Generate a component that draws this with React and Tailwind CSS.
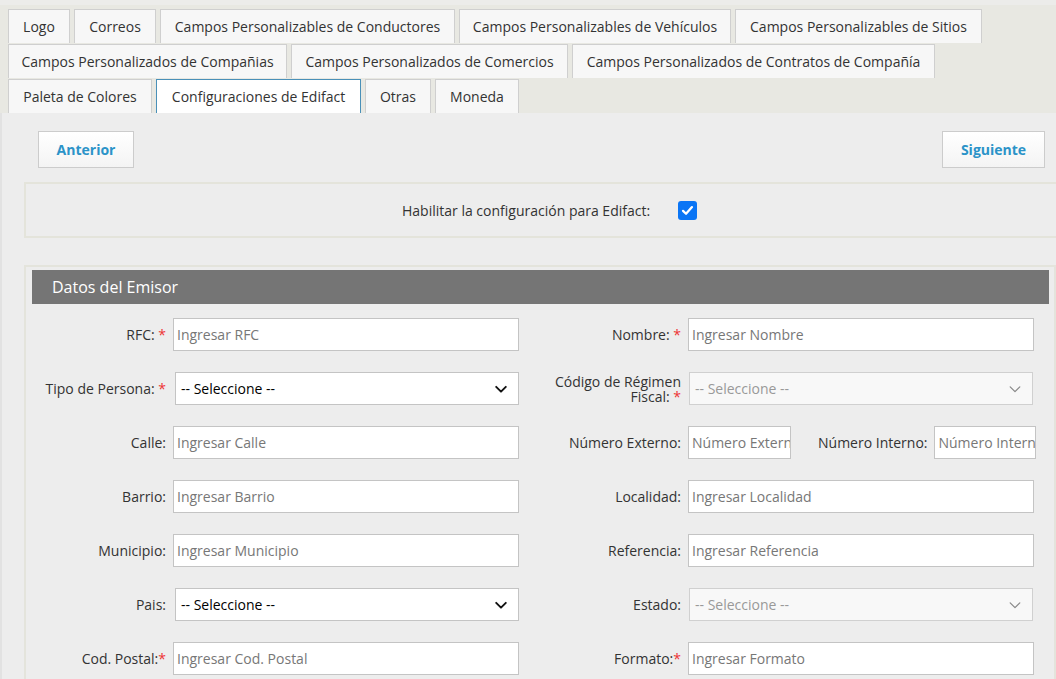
const tabRows = [
  [
    { label: 'Logo', w: 'w-[62px]' },
    { label: 'Correos', w: 'w-[82px]' },
    { label: 'Campos Personalizables de Conductores', w: 'w-[295px]' },
    { label: 'Campos Personalizables de Vehículos', w: 'w-[272px]' },
    { label: 'Campos Personalizables de Sitios', w: 'w-[247px]' },
  ],
  [
    { label: 'Campos Personalizados de Compañias', w: 'w-[279px]' },
    { label: 'Campos Personalizados de Comercios', w: 'w-[277px]' },
    { label: 'Campos Personalizados de Contratos de Compañía', w: 'w-[363px]' },
  ],
  [
    { label: 'Paleta de Colores', w: 'w-[144px]' },
    { label: 'Configuraciones de Edifact', w: 'w-[205px]', active: true },
    { label: 'Otras', w: 'w-[66px]' },
    { label: 'Moneda', w: 'w-[84px]' },
  ],
]

function Chevron({ disabled }) {
  return (
    <svg width="14" height="14" viewBox="0 0 16 16" className="shrink-0">
      <path d="M2.5 5.5 8 11l5.5-5.5" fill="none" stroke={disabled ? '#888' : '#111'}
        strokeWidth={disabled ? 1.4 : 2.2} strokeLinecap="round" strokeLinejoin="round" />
    </svg>
  )
}

function Label({ children, required, tight, className = '' }) {
  return (
    <div className={`text-right text-[#333] leading-[15px] ${className}`}>
      {children}
      {required && <span className="text-[#e33]">{tight ? '*' : ' *'}</span>}
    </div>
  )
}

function Input({ placeholder, className = 'w-[346px]' }) {
  return (
    <div className={`h-[33px] bg-white border border-[#c4c4c4] flex items-center pl-[3px] overflow-hidden whitespace-nowrap text-[#777] ${className}`}>
      {placeholder}
    </div>
  )
}

function Select({ disabled }) {
  return (
    <div className={`h-[33px] w-[344px] border flex items-center justify-between pl-[5px] pr-[10px] ${
      disabled ? 'bg-[#f8f8f8] border-[#d0d0d0] text-[#999] ml-[1px]' : 'bg-white border-[#c4c4c4] text-black ml-[2px]'
    }`}>
      <span>-- Seleccione --</span>
      <Chevron disabled={disabled} />
    </div>
  )
}

function Field({ label, required, tight, labelW, children }) {
  return (
    <div className="flex items-center">
      <Label required={required} tight={tight} className={labelW}>{label}</Label>
      <div className="ml-[7px]">{children}</div>
    </div>
  )
}

export default function App() {
  return (
    <div className="w-[1056px] h-[679px] overflow-hidden bg-[#ededed] text-[14px] font-['Open_Sans',sans-serif] text-[#333]">
      {/* Tabs */}
      <div className="bg-[#e8e8e2] border-t-[5px] border-[#ececea] pt-[4px] pl-[8px] flex flex-col gap-[1px]">
        {tabRows.map((row, i) => (
          <div key={i} className="flex gap-[4px]">
            {row.map(t => (
              <div key={t.label}
                className={`${t.w} h-[34px] flex items-center justify-center whitespace-nowrap border border-b-0 ${
                  t.active ? 'bg-white border-[#4a90b8] border-[1.5px]' : 'bg-[#f7f7f7] border-[#cfcfcf]'
                }`}>
                {t.label}
              </div>
            ))}
          </div>
        ))}
      </div>

      {/* Content */}
      <div className="border-l-2 border-[#e2e2e2]">
        <div className="flex justify-between pt-[18px] pl-[36px] pr-[11px]">
          <button className="w-[96px] h-[37px] border border-[#cccccc] bg-gradient-to-b from-white to-[#f4f4f4] font-bold text-[#2b93c8]">
            Anterior
          </button>
          <button className="w-[103px] h-[37px] border border-[#cccccc] bg-gradient-to-b from-white to-[#f4f4f4] font-bold text-[#2b93c8]">
            Siguiente
          </button>
        </div>

        <div className="ml-[22px] mt-[14px] h-[56px] border-2 border-r-0 border-[#e4e4db] flex items-center">
          <span className="ml-[376px]">Habilitar la configuración para Edifact:</span>
          <div className="ml-[28px] w-[19px] h-[19px] rounded-[3px] bg-[#0a75f5] flex items-center justify-center">
            <svg width="13" height="13" viewBox="0 0 16 16">
              <path d="M2.5 8.5 6.2 12 13.5 3.8" fill="none" stroke="white" strokeWidth="2.8" strokeLinecap="round" strokeLinejoin="round" />
            </svg>
          </div>
        </div>

        <div className="ml-[22px] mt-[27px] border-2 border-[#e4e4dc] pt-[3px] pl-[6px] pr-[5px] h-[500px]">
          <div className="h-[34px] bg-[#757575] text-white text-[16px] flex items-center pl-[20px]">
            Datos del Emisor
          </div>

          <div className="flex flex-col gap-[21px] pt-[14px]">
            <div className="flex">
              <div className="w-[516px]"><Field label="RFC:" required labelW="w-[134px]"><Input placeholder="Ingresar RFC" /></Field></div>
              <Field label="Nombre:" required labelW="w-[133px]"><Input placeholder="Ingresar Nombre" /></Field>
            </div>
            <div className="flex">
              <div className="w-[516px]"><Field label="Tipo de Persona:" required labelW="w-[134px]"><Select /></Field></div>
              <Field label="Código de Régimen Fiscal:" required labelW="w-[139px] -ml-[6px]"><Select disabled /></Field>
            </div>
            <div className="flex">
              <div className="w-[516px]"><Field label="Calle:" labelW="w-[134px]"><Input placeholder="Ingresar Calle" /></Field></div>
              <Field label="Número Externo:" labelW="w-[133px]"><Input placeholder="Número Externo" className="w-[103px]" /></Field>
              <div className="ml-[27px]">
                <Field label="Número Interno:" labelW="w-auto"><Input placeholder="Número Interno" className="w-[102px]" /></Field>
              </div>
            </div>
            <div className="flex">
              <div className="w-[516px]"><Field label="Barrio:" labelW="w-[134px]"><Input placeholder="Ingresar Barrio" /></Field></div>
              <Field label="Localidad:" labelW="w-[133px]"><Input placeholder="Ingresar Localidad" /></Field>
            </div>
            <div className="flex">
              <div className="w-[516px]"><Field label="Municipio:" labelW="w-[134px]"><Input placeholder="Ingresar Municipio" /></Field></div>
              <Field label="Referencia:" labelW="w-[133px]"><Input placeholder="Ingresar Referencia" /></Field>
            </div>
            <div className="flex">
              <div className="w-[516px]"><Field label="Pais:" labelW="w-[134px]"><Select /></Field></div>
              <Field label="Estado:" labelW="w-[133px]"><Select disabled /></Field>
            </div>
            <div className="flex">
              <div className="w-[516px]"><Field label="Cod. Postal:" required tight labelW="w-[134px]"><Input placeholder="Ingresar Cod. Postal" /></Field></div>
              <Field label="Formato:" required tight labelW="w-[133px]"><Input placeholder="Ingresar Formato" /></Field>
            </div>
          </div>
        </div>
      </div>
    </div>
  )
}
